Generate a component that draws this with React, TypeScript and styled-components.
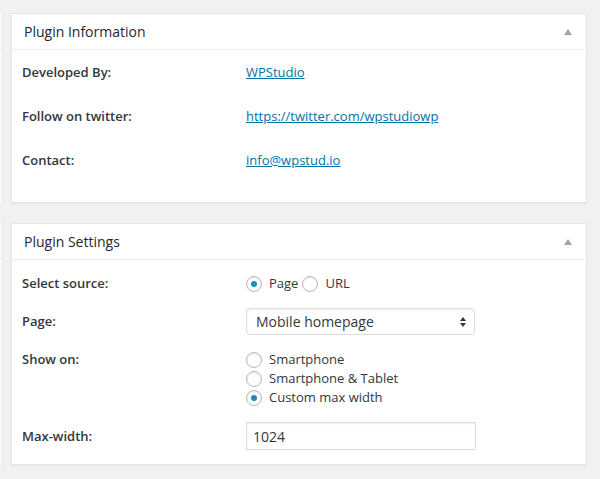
import React from "react";
import styled, { createGlobalStyle } from "styled-components";

const Global = createGlobalStyle`
  html, body { margin: 0; padding: 0; background: #f1f1f1; }
  body { font-family: "Open Sans", "Noto Sans", sans-serif; color: #444; }
  * { box-sizing: border-box; }
`;

const Page = styled.div`
  display: flex;
  flex-direction: column;
  gap: 20px;
  padding: 13px 13px 14px 0;
  width: 600px;
`;

const PanelRow = styled.div`
  display: flex;
  align-items: stretch;
`;

const GhostEdge = styled.div`
  width: 3px;
  margin-right: 8px;
  background: #fafafa;
  border-right: 1px solid #e8e8e8;
  display: flex;
  flex-direction: column;
`;

const GhostHead = styled.div`
  height: 36px;
  border-bottom: 1px solid #e5e5e5;
`;

const Panel = styled.section`
  width: 576px;
  background: #fff;
  border: 1px solid #e5e5e5;
  box-shadow: 0 1px 1px rgba(0, 0, 0, 0.04);
`;

const PanelHeader = styled.div`
  display: flex;
  align-items: center;
  justify-content: space-between;
  height: 36px;
  padding: 0 14px 0 12px;
  border-bottom: 1px solid #eee;
`;

const Title = styled.h2`
  margin: 0;
  font-size: 14px;
  line-height: 19px;
  font-weight: 400;
  color: #23282d;
`;

const Toggle = styled.svg`
  width: 8px;
  height: 6px;
  display: block;
`;

const InfoBody = styled.div`
  padding: 0 0 20px 10px;
`;

const InfoRow = styled.div`
  display: flex;
  align-items: center;
  height: 44px;
`;

const Label = styled.div<{ $top?: boolean }>`
  width: 224px;
  flex: none;
  font-size: 13px;
  line-height: 19px;
  font-weight: 600;
  color: #32373c;
  align-self: ${(p) => (p.$top ? "flex-start" : "center")};
`;

const Link = styled.a`
  font-size: 13px;
  line-height: 19px;
  color: #0073aa;
  text-decoration: underline;
`;

const SettingsBody = styled.div`
  padding: 14px 0 14px 10px;
  display: flex;
  flex-direction: column;
`;

const SettingRow = styled.div<{ $gap?: number }>`
  display: flex;
  align-items: center;
  margin-top: ${(p) => p.$gap ?? 0}px;
`;

const RadioGroup = styled.div<{ $vertical?: boolean }>`
  display: flex;
  flex-direction: ${(p) => (p.$vertical ? "column" : "row")};
`;

const Option = styled.label<{ $after?: number }>`
  display: flex;
  align-items: center;
  height: 19px;
  font-size: 13px;
  line-height: 19px;
  color: #32373c;
  margin-right: ${(p) => p.$after ?? 0}px;
`;

const RadioCircle = styled.span<{ $checked?: boolean }>`
  width: 16px;
  height: 16px;
  flex: none;
  border-radius: 50%;
  border: 1px solid #b4b9be;
  background: #fff;
  box-shadow: inset 0 1px 2px rgba(0, 0, 0, 0.1);
  margin-right: 7px;
  display: flex;
  align-items: center;
  justify-content: center;
  &::after {
    content: "";
    display: ${(p) => (p.$checked ? "block" : "none")};
    width: 6px;
    height: 6px;
    border-radius: 50%;
    background: #1e8cbe;
  }
`;

const SelectBox = styled.div`
  width: 229px;
  height: 27px;
  border: 1px solid #ddd;
  border-radius: 4px;
  box-shadow: inset 0 1px 2px rgba(0, 0, 0, 0.07);
  display: flex;
  align-items: center;
  justify-content: space-between;
  padding: 0 8px 0 9px;
  font-size: 14px;
  color: #32373c;
`;

const Arrows = styled.svg`
  width: 6px;
  height: 10px;
  display: block;
`;

const TextInput = styled.input`
  width: 230px;
  height: 28px;
  border: 1px solid #ddd;
  box-shadow: inset 0 1px 2px rgba(0, 0, 0, 0.07);
  padding: 0 6px;
  font-family: "Open Sans", "Noto Sans", sans-serif;
  font-size: 14px;
  color: #32373c;
  outline: none;
  margin: 0;
`;

const ToggleIcon = () => (
  <Toggle viewBox="0 0 8 6">
    <polygon points="4,0 8,6 0,6" fill="#a0a5aa" />
  </Toggle>
);

const Radio = ({ checked, label, after }: { checked?: boolean; label: string; after?: number }) => (
  <Option $after={after}>
    <RadioCircle $checked={checked} />
    {label}
  </Option>
);

const Box = ({ title, children }: { title: string; children: React.ReactNode }) => (
  <PanelRow>
    <GhostEdge>
      <GhostHead />
    </GhostEdge>
    <Panel>
      <PanelHeader>
        <Title>{title}</Title>
        <ToggleIcon />
      </PanelHeader>
      {children}
    </Panel>
  </PanelRow>
);

export default function App() {
  return (
    <>
      <Global />
      <Page>
        <Box title="Plugin Information">
          <InfoBody>
            <InfoRow>
              <Label>Developed By:</Label>
              <Link href="#">WPStudio</Link>
            </InfoRow>
            <InfoRow>
              <Label>Follow on twitter:</Label>
              <Link href="#">https://twitter.com/wpstudiowp</Link>
            </InfoRow>
            <InfoRow>
              <Label>Contact:</Label>
              <Link href="#">info@wpstud.io</Link>
            </InfoRow>
          </InfoBody>
        </Box>
        <Box title="Plugin Settings">
          <SettingsBody>
            <SettingRow>
              <Label>Select source:</Label>
              <RadioGroup>
                <Radio checked label="Page" after={4} />
                <Radio label="URL" />
              </RadioGroup>
            </SettingRow>
            <SettingRow $gap={15}>
              <Label>Page:</Label>
              <SelectBox>
                <span>Mobile homepage</span>
                <Arrows viewBox="0 0 6 10">
                  <polygon points="3,0 6,4 0,4" fill="#32373c" />
                  <polygon points="0,6 6,6 3,10" fill="#32373c" />
                </Arrows>
              </SelectBox>
            </SettingRow>
            <SettingRow $gap={15}>
              <Label $top>Show on:</Label>
              <RadioGroup $vertical>
                <Radio label="Smartphone" />
                <Radio label="Smartphone & Tablet" />
                <Radio checked label="Custom max width" />
              </RadioGroup>
            </SettingRow>
            <SettingRow $gap={15}>
              <Label>Max-width:</Label>
              <TextInput defaultValue="1024" />
            </SettingRow>
          </SettingsBody>
        </Box>
      </Page>
    </>
  );
}
